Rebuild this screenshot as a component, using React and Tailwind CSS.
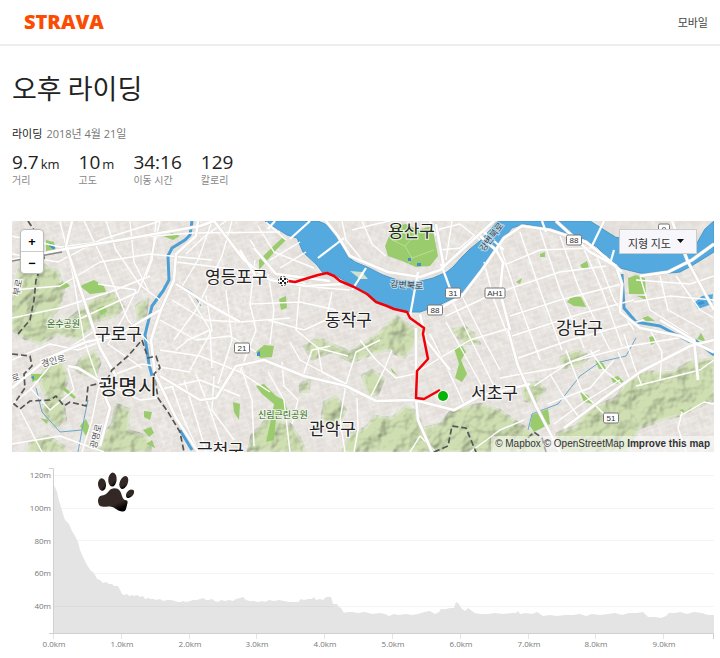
import { useState } from "react";

const stats = [
  { value: "9.7", unit: "km", label: "거리" },
  { value: "10", unit: "m", label: "고도" },
  { value: "34:16", unit: "", label: "이동 시간" },
  { value: "129", unit: "", label: "칼로리" },
];

const KOREAN = "font-['Noto_Sans_CJK_KR',sans-serif]";
const LATIN = "font-['Open_Sans','Noto_Sans_CJK_KR',sans-serif]";

const hills = [
  "M20 262 L36 258 L48 268 L58 270 L64 290 L60 308 L48 320 L66 322 L92 300 L112 292 L124 306 L116 316 L94 322 L80 340 L58 334 L40 344 L24 338 L12 330 L12 300Z",
  "M44 366 L62 362 L68 378 L62 396 L66 420 L54 428 L42 410 L46 396 L40 384Z",
  "M82 358 L94 350 L100 362 L96 378 L82 374 L74 368Z",
  "M116 404 L130 410 L128 430 L146 436 L152 452 L98 452 L104 434 L112 424Z",
  "M136 306 L148 298 L146 316 L138 322Z",
  "M30 442 L48 436 L64 446 L66 452 L28 452Z",
  "M304 346 L318 338 L332 344 L350 352 L362 344 L380 332 L396 316 L410 326 L420 330 L414 346 L404 358 L388 350 L372 354 L352 362 L330 352 L312 360Z",
  "M324 402 L336 396 L346 410 L338 428 L322 420Z",
  "M252 434 L268 418 L290 424 L300 438 L306 452 L248 452Z",
  "M342 452 L350 434 L366 428 L374 416 L392 418 L406 406 L414 410 L424 428 L440 424 L452 410 L480 404 L500 410 L520 424 L538 436 L548 452Z",
  "M362 376 L372 370 L384 378 L378 394 L368 396Z",
  "M556 434 L576 426 L590 408 L616 398 L626 382 L640 372 L672 372 L690 362 L714 358 L714 400 L684 414 L662 420 L640 428 L626 452 L564 452Z",
  "M560 358 L576 350 L590 356 L580 366 L562 368Z",
  "M522 386 L538 382 L546 390 L534 404 L524 400Z",
  "M452 330 L464 326 L474 334 L480 344 L464 344Z",
  "M300 384 L310 380 L308 392 L300 392Z",
];

const parks = [
  "M385 246 L393 226 L406 224 L418 230 L432 226 L438 256 L430 266 L416 267 L402 261 L388 256Z",
  "M163 236 L172 233 L180 236 L173 240Z",
  "M46 240 L54 242 L56 250 L46 251Z",
  "M80 286 L94 280 L104 286 L106 292 L90 294Z",
  "M58 284 L66 282 L70 286 L64 289Z",
  "M97 308 L104 306 L107 311 L101 316Z",
  "M259 270 L276 250 L286 240 L282 238 L259 260Z",
  "M279 299 L286 296 L287 308 L281 310Z",
  "M256 352 L264 345 L274 346 L272 357 L260 358Z",
  "M31 374 L43 374 L45 377 L32 382Z",
  "M63 386 L76 397 L74 399 L62 389Z",
  "M80 426 L86 419 L90 428 L86 436Z",
  "M40 418 L48 420 L47 424Z",
  "M144 411 L152 412 L150 420 L144 417Z",
  "M143 430 L151 427 L154 433 L149 437Z",
  "M146 444 L152 440 L155 448Z",
  "M233 402 L240 404 L239 420 L234 412Z",
  "M256 386 L264 384 L276 396 L284 400 L288 412 L276 418 L274 440 L266 442 L270 424 L274 404 L262 394Z",
  "M540 254 L545 252 L545 257 L540 257Z",
  "M516 282 L522 278 L520 284Z",
  "M580 265 L587 261 L589 268 L582 268Z",
  "M567 302 L572 296 L581 297 L586 307 L574 306Z",
  "M628 278 L636 275 L645 278 L646 294 L629 294Z",
  "M637 296 L646 296 L646 300Z",
  "M642 318 L648 316 L655 321 L646 321Z",
  "M454 348 L462 346 L466 352 L461 360 L467 374 L462 382 L455 378 L459 364Z",
  "M595 360 L603 363 L606 369 L599 369Z",
  "M611 378 L618 376 L624 382 L614 384Z",
  "M577 384 L580 392 L588 395 L593 404 L584 402Z",
  "M532 415 L548 409 L550 424 L534 432 L530 426Z",
  "M649 337 L654 336 L655 343 L651 345Z",
  "M697 339 L701 333 L706 342Z",
  "M679 410 L683 409 L685 413Z",
  "M602 229 L615 236 L610 240Z",
  "M466 288 L471 282 L462 292Z",
  "M391 368 L398 376 L392 372Z",
];

const minorRoads = [
  "M12 236 L60 247 L130 238 L192 233 L280 232",
  "M12 254 L58 262 L100 240 L160 221",
  "M12 290 L60 286 L100 262 L150 254 L212 260",
  "M60 221 L72 270 L84 340 L98 380",
  "M84 221 L104 262 L128 320 L150 344",
  "M106 221 L116 250 L140 285 L160 300",
  "M130 221 L134 262 L148 290",
  "M160 221 L150 262 L138 292 L60 328",
  "M12 318 L60 308 L110 292 L150 276",
  "M98 284 L136 290 L124 316 L108 344 L142 368",
  "M156 221 L152 260 L146 276",
  "M176 262 L240 270 L300 286 L350 290",
  "M186 254 L205 236 L226 221",
  "M212 221 L198 260 L180 290",
  "M232 221 L222 256 L196 310 L174 340",
  "M172 300 L205 320 L240 322 L290 318",
  "M160 320 L196 340 L230 336 L256 352",
  "M186 290 L210 330 L212 368",
  "M206 296 L212 330 L190 370",
  "M226 290 L232 340 L218 384",
  "M255 260 L250 304 L256 330 L240 372",
  "M268 274 L274 310 L270 344",
  "M300 286 L296 330 L318 348 L348 356",
  "M332 292 L326 320 L304 330 L268 320",
  "M250 304 L300 302 L336 310",
  "M160 350 L200 356 L240 372 L270 392",
  "M158 390 L200 380 L240 396",
  "M196 374 L210 410 L224 452",
  "M184 380 L196 418 L206 452",
  "M172 386 L184 420 L196 446",
  "M214 376 L212 410 L234 440",
  "M242 370 L252 400 L254 446",
  "M290 342 L300 360 L330 376 L346 384",
  "M318 348 L322 372 L346 384 L340 420 L345 452",
  "M357 398 L358 430 L354 452",
  "M346 384 L356 352 L380 340",
  "M282 362 L284 386 L298 400 L292 424",
  "M303 376 L312 350 L330 346",
  "M360 340 L376 360 L396 378 L414 374",
  "M370 398 L384 370 L392 350",
  "M414 374 L440 358 L470 340 L510 328",
  "M430 334 L450 374 L464 404",
  "M446 322 L462 350 L484 390",
  "M452 300 L472 342 L494 386",
  "M460 292 L484 340 L500 370",
  "M446 316 L480 300 L500 290",
  "M484 262 L494 300 L512 346",
  "M500 246 L518 300 L540 360",
  "M520 232 L540 290 L562 350",
  "M540 230 L560 290 L584 348",
  "M560 236 L578 286 L610 350",
  "M580 240 L602 290 L622 346",
  "M596 254 L614 300 L634 330",
  "M502 266 L540 250 L592 248",
  "M500 292 L560 272 L606 266",
  "M510 316 L560 300 L622 284",
  "M512 336 L580 314 L634 300",
  "M518 358 L570 340 L644 320",
  "M500 378 L556 368 L600 350",
  "M534 386 L570 362 L630 346 L690 336",
  "M624 334 L634 366 L642 386",
  "M650 330 L662 352 L660 380",
  "M566 350 L582 392 L608 418",
  "M590 350 L604 370 L624 386",
  "M550 374 L562 394 L578 416",
  "M548 404 L590 388 L614 360",
  "M554 424 L584 402 L620 380",
  "M618 352 L630 380",
  "M640 276 L650 310 L688 334",
  "M660 276 L668 310 L704 330",
  "M676 276 L700 310 L714 318",
  "M634 302 L670 296 L714 300",
  "M636 280 L690 284 L714 276",
  "M342 221 L346 240 L364 262",
  "M362 221 L372 244 L386 256",
  "M352 230 L376 224 L390 221",
  "M436 230 L460 224 L480 240",
  "M440 250 L460 248 L474 236",
  "M436 236 L430 221",
  "M452 221 L446 260",
  "M258 226 L274 252 L314 268",
  "M266 222 L286 240",
  "M270 260 L300 242",
  "M280 268 L306 252",
  "M250 240 L272 272 L306 284",
  "M12 360 L50 344 L78 350 L106 340",
  "M12 404 L30 390 L60 354 L96 330",
  "M30 388 L50 410 L74 390 L68 368",
  "M20 410 L42 452",
  "M100 380 L92 420 L82 452",
  "M12 444 L60 436 L104 452",
  "M100 380 L140 400 L158 398",
  "M116 374 L142 364 L190 372",
  "M176 350 L188 340 L210 330",
  "M470 452 L500 430 L524 420",
  "M636 386 L700 370 L714 360",
  "M680 416 L704 402 L714 404",
  "M682 412 L678 428 L686 452",
  "M410 452 L420 436 L436 452",
  "M268 372 L284 400 L290 452",
];

const majorRoads = [
  "M12 260 L60 250 L120 240 L200 226 L214 221",
  "M72 221 L66 246 L84 300 L100 348 L116 376",
  "M12 388 L48 358 L86 342 L116 336 L160 310",
  "M198 221 L196 236 L176 254 L174 280 L160 312 L151 340 L155 374 L176 418 L198 452",
  "M176 284 L208 304 L240 322",
  "M214 221 L244 260 L270 280 L306 286 L344 284",
  "M240 250 L258 280",
  "M160 376 L200 400 L216 398 L236 366 L264 360 L304 376 L346 386 L376 401 L414 400 L430 404 L454 410 L480 396 L530 384",
  "M254 248 L276 274 L330 281",
  "M416 328 L416 398 L418 420 L432 452",
  "M420 314 L426 340 L450 370",
  "M508 330 L518 366 L536 406 L560 452",
  "M503 262 L500 292 L510 330",
  "M564 428 L604 398 L640 372 L690 346 L714 340",
  "M640 276 L668 272 L692 260 L714 244",
  "M616 266 L622 284 L620 312 L640 328 L680 336 L714 352",
  "M660 320 L694 340 L698 380",
  "M672 221 L688 262 L714 310",
  "M556 221 L590 252 L616 266",
  "M326 221 L338 236 L350 256 L388 272 L420 277 L440 270 L464 248 L494 221",
  "M444 268 L436 224",
  "M480 236 L496 250 L504 264",
  "M430 314 L462 296 L482 270 L504 238 L522 226 L550 230 L586 242 L606 258 L622 272",
  "M100 446 L110 408 L98 380 L78 368 L68 366",
];

const bridges = [
  "M318 258 L344 238",
  "M366 268 L352 290",
  "M418 272 L410 316",
  "M441 264 L452 294",
  "M484 232 L504 250",
  "M542 221 L546 232",
  "M604 221 L591 248",
  "M614 250 L610 264",
  "M275 221 L268 229",
  "M310 221 L290 239",
];

const boundaries = [
  "M28 221 L38 236 L44 258 L36 280 L34 300 L30 320 L18 334",
  "M12 354 L30 356 L32 366 L24 374 L25 388 L14 404 L20 409 L30 401 L50 400 L56 396 L64 406 L70 402 L86 406 L88 386 L106 382 L112 370 L128 356 L142 340 L148 358 L156 356 L160 368 L154 374 L158 398 L168 412 L180 432 L184 452",
  "M434 452 L448 446 L452 426 L466 428 L476 452",
  "M528 438 L534 432 L542 438 L546 452",
];

const districts = [
  { name: "영등포구", x: 205, y: 283, size: 17 },
  { name: "용산구", x: 388, y: 237, size: 17 },
  { name: "동작구", x: 325, y: 326, size: 17 },
  { name: "강남구", x: 556, y: 334, size: 17 },
  { name: "서초구", x: 471, y: 399, size: 17 },
  { name: "구로구", x: 95, y: 340, size: 17 },
  { name: "관악구", x: 309, y: 435, size: 17 },
  { name: "금천구", x: 197, y: 456, size: 17 },
  { name: "광명시", x: 99, y: 394, size: 21 },
];

const shields = [
  { text: "21", x: 242, y: 348 },
  { text: "31", x: 453, y: 293 },
  { text: "88", x: 435, y: 310 },
  { text: "AH1", x: 495, y: 293 },
  { text: "88", x: 574, y: 240 },
  { text: "9", x: 664, y: 229 },
  { text: "51", x: 611, y: 418 },
];

const river =
  "M265 221 L287 235 L297 238 L303 252 L317 265 L323 273 L335 275 L350 284 L368 294 L378 303 L392 308 L407 312 L420 312 L437 306 L454 298 L470 287 L480 272 L497 246 L512 228 L524 224 L547 228 L563 232 L582 238 L597 247 L608 258 L620 268 L640 273 L660 274 L680 272 L693 265 L714 252 L714 221 L705 229 L697 243 L650 245 L615 237 L598 226 L590 221 L498 221 L492 228 L480 241 L470 249 L462 257 L453 267 L447 272 L433 278 L417 282 L400 281 L383 275 L367 267 L355 262 L348 257 L343 247 L338 235 L325 224 L318 221Z";

const Street = ({ paths, width, color = "#fff", ...rest }) => (
  <g fill="none" stroke={color} strokeWidth={width} strokeLinejoin="round" {...rest}>
    {paths.map((d) => (
      <path key={d} d={d} />
    ))}
  </g>
);

const MapCanvas = () => (
  <svg
    viewBox="12 221 702 231"
    className={`block w-full h-auto ${KOREAN}`}
    role="img"
    aria-label="라이딩 경로"
  >
    <defs>
      <pattern id="blocksA" width="13" height="10" patternUnits="userSpaceOnUse" patternTransform="rotate(-18)">
        <path d="M0 0H13M0 0V10M6 0V5H13" fill="none" stroke="#fff" strokeWidth="1" />
      </pattern>
      <pattern id="blocksB" width="11" height="12" patternUnits="userSpaceOnUse" patternTransform="rotate(24)">
        <path d="M0 0H11M0 0V12M0 6H6V12" fill="none" stroke="#fff" strokeWidth="1" />
      </pattern>
      <filter id="relief" x="0" y="0" width="100%" height="100%" colorInterpolationFilters="sRGB">
        <feTurbulence type="fractalNoise" baseFrequency="0.06" numOctaves="3" seed="8" result="noise" />
        <feDiffuseLighting in="noise" surfaceScale="2.2" diffuseConstant="1.08" lightingColor="#fff" result="light">
          <feDistantLight azimuth="225" elevation="64" />
        </feDiffuseLighting>
        <feComposite in="light" in2="SourceAlpha" operator="in" result="shade" />
        <feBlend in="SourceGraphic" in2="shade" mode="multiply" />
      </filter>
      <filter id="grain" x="0" y="0" width="100%" height="100%" colorInterpolationFilters="sRGB">
        <feTurbulence type="fractalNoise" baseFrequency="0.12" numOctaves="3" seed="3" />
        <feColorMatrix values="0 0 0 0 0.94  0 0 0 0 0.93  0 0 0 0 0.92  1.6 0 0 0 -0.55" />
      </filter>
    </defs>

    {/* Land and terrain */}
    <rect x="12" y="221" width="702" height="231" fill="#e2ddd8" />
    <rect x="12" y="221" width="702" height="231" filter="url(#grain)" />
    <path d="M12 221H265L310 280L420 320L410 452H12Z" fill="url(#blocksA)" opacity=".4" />
    <path d="M410 315L520 225L714 280V452H410Z" fill="url(#blocksA)" opacity=".4" />
    <path d="M150 300L260 290L260 380L160 452ZM330 221H500L440 270L380 266Z" fill="url(#blocksB)" opacity=".4" />
    <g filter="url(#relief)">
      {hills.map((d) => (
        <path key={d} d={d} fill="#cfdfb2" stroke="#dde4cd" strokeWidth="3" strokeLinejoin="round" />
      ))}
    </g>
    <g fill="#9acb6d">
      {parks.map((d) => (
        <path key={d} d={d} />
      ))}
    </g>
    <path d="M392 240L405 246L418 232M405 246L412 258L434 250M412 258L408 264" fill="none" stroke="#b9dd97" />

    {/* Water */}
    <path d={river} fill="#54aade" stroke="#4698cd" strokeWidth="1" />
    <path d="M350 271L362 272L368 279L360 279Z" fill="#cfe0cf" />
    <Street
      paths={[
        "M192 221 L190 235 L185 240 L172 248 L168 256 L169 280 L163 291 L152 306 L145 335 L146 344 L149 364 L152 376",
        "M622 274 L624 308 L636 322 L660 326 L690 342",
        "M674 334 L696 341 L714 355",
        "M180 430 L192 450",
      ]}
      width="3"
      color="#4b9fd4"
    />
    <Street
      paths={[
        "M176 283 L192 292 L201 306",
        "M36 388 L42 412 L60 432 L82 430 L85 414 L88 400",
        "M82 430 L78 452",
        "M636 338 L626 356 L600 362 L580 376 L558 404 L532 414 L528 430",
      ]}
      width="1"
      color="#6aa9c9"
    />
    <path d="M694 303L702 296L713 294L712 304L698 309Z" fill="#54aade" />
    <path
      d="M408 258h3v3h-3zM417 263h4v3h-4zM50 243l5 4l-1 3l-5-4zM257 353l3-2v5h-3zM31 377l3-1v4zM697 303l6-2l2 2l-5 2z"
      fill="#3d8fd0"
    />

    {/* Roads */}
    <Street paths={minorRoads} width="1.4" />
    <Street paths={majorRoads} width="3.6" color="#dfdad4" />
    <Street paths={majorRoads} width="2.6" />
    <Street paths={bridges} width="2.2" />
    <Street paths={boundaries} width="1.7" color="#555" strokeDasharray="6 3" />
    <path d="M12 261L62 252" stroke="#888" strokeWidth="1.5" />

    {/* Labels */}
    <g fill="#222" stroke="#fff" strokeWidth="2.5" strokeOpacity=".7" paintOrder="stroke">
      {districts.map((d) => (
        <text key={d.name} x={d.x} y={d.y} fontSize={d.size}>
          {d.name}
        </text>
      ))}
    </g>
    <g fontSize="9" fill="#2b6322" stroke="#eef3e4" strokeWidth="2" paintOrder="stroke">
      <text x="47" y="327">온수공원</text>
      <text x="258" y="418">신림근린공원</text>
    </g>
    <g fontSize="9" fill="#555" stroke="#fff" strokeWidth="2" paintOrder="stroke">
      <text x="42" y="367" transform="rotate(-14 42 367)">경인로</text>
      <text x="96" y="449" transform="rotate(-76 96 449)">광명로</text>
      <text x="13" y="382" transform="rotate(-20 13 382)">로</text>
      <text x="19" y="296" transform="rotate(-78 19 296)">부로</text>
    </g>
    <g fontSize="9" fill="#444" stroke="#b5d9ee" strokeWidth="2" paintOrder="stroke">
      <text x="390" y="287" transform="rotate(4 390 287)">강변북로</text>
      <text x="484" y="252" transform="rotate(-53 484 252)">강변북로</text>
    </g>
    {shields.map((s) => {
      const w = s.text.length > 2 ? 20 : s.text.length > 1 ? 15 : 11;
      return (
        <g key={`${s.x}-${s.y}`}>
          <rect x={s.x - w / 2} y={s.y - 5} width={w} height="10" rx="1.5" fill="#fff" stroke="#777" />
          <text
            x={s.x}
            y={s.y + 3}
            fontSize="8"
            textAnchor="middle"
            fill="#333"
            className="font-['Liberation_Sans',sans-serif]"
          >
            {s.text}
          </text>
        </g>
      );
    })}

    {/* Ride */}
    <path
      d="M288 281L295 282L318 275L327 273L334 276L340 281L354 287L367 294L376 302L387 306L394 309L407 312L410 318L424 328L423 334L428 359L417 371L416 398L424 399L440 390"
      fill="none"
      stroke="#f00008"
      strokeWidth="2.5"
      strokeLinejoin="round"
    />
    <circle cx="443" cy="396" r="6" fill="#fff" />
    <circle cx="443" cy="396" r="5" fill="#08b408" />
    <circle cx="283" cy="281" r="5.5" fill="#fff" />
    <circle cx="283" cy="281" r="4.6" fill="#fff" stroke="#333" strokeWidth="1" strokeDasharray="2 1.6" />
    <path d="M280 278h2v2h-2zM284 278h2v2h-2zM282 280h2v2h-2zM280 282h2v2h-2zM284 282h2v2h-2z" fill="#222" />
  </svg>
);

const profile =
  "54,486 55,487 57,492 59,501 61,507 63,514 65,520 67,522 69,524 72,531 75,536 78,542 80,550 83,557 87,565 91,571 93,572 95,575 97,579 100,580 103,583 106,582 109,584 112,584 114,586 118,586 120,590 122,594 124,595 127,594 129,596 132,595 134,596 137,595 140,597 143,596 145,599 148,598 151,599 154,599 156,600 160,599 163,601 167,600 171,600 175,601 178,602 181,602 183,601 186,602 190,601 193,600 197,600 200,599 203,598 206,600 209,600 212,599 215,601 218,602 221,600 225,601 229,600 233,601 236,599 240,598 243,597 246,600 250,601 254,601 258,602 262,601 265,602 269,600 274,601 279,600 284,601 290,602 298,602 301,599 304,600 308,599 312,599 314,597 316,600 320,599 323,600 326,597 331,597 333,604 337,604 339,607 341,608 344,613 347,612 352,612 358,613 365,612 372,614 380,613 385,614 389,616 394,614 399,615 406,614 412,615 418,614 424,612 430,611 435,614 439,612 441,609 446,609 450,608 454,608 456,602 458,603 462,609 465,611 468,608 472,611 475,613 480,614 488,614 495,613 503,614 512,613 516,613 518,611 520,614 526,613 532,614 537,612 540,614 543,616 550,615 557,616 565,615 573,615 580,614 586,616 592,614 600,615 608,614 615,613 622,615 629,613 637,613 643,612 646,615 648,617 655,617 661,618 666,616 669,613 675,613 680,612 687,614 694,612 702,613 708,615 714,615";

const ElevationChart = () => (
  <svg
    viewBox="12 464 702 190"
    className={`block w-full h-auto ${LATIN}`}
    role="img"
    aria-label="고도 그래프"
  >
    <defs>
      <linearGradient id="paw" x1="0" y1="0" x2=".6" y2="1">
        <stop offset="0" stopColor="#aaa" />
        <stop offset=".22" stopColor="#302825" />
        <stop offset=".75" stopColor="#342825" />
        <stop offset="1" stopColor="#000" />
      </linearGradient>
    </defs>
    <g stroke="#f4f4f4">
      {[475.5, 508.5, 540.5, 573.5, 606.5].map((y) => (
        <path key={y} d={`M54 ${y}H714`} />
      ))}
    </g>
    <polygon points={`54,634 ${profile} 714,634`} fill="#e4e4e4" />
    <path d="M54 606.5H334" stroke="#dcdcdc" />
    <path d="M49 468.5H53.5V633.5M49 633.5H714" fill="none" stroke="#d0d0d0" />
    <path d="M713.5 634V639" stroke="#d0d0d0" />
    <g fontSize="8" fill="#777">
      {["120m", "100m", "80m", "60m", "40m"].map((t, i) => (
        <text key={t} x="51" y={478 + Math.round(i * 32.8)} textAnchor="end">
          {t}
        </text>
      ))}
      {Array.from({ length: 10 }, (_, i) => (
        <g key={i}>
          <path d={`M${Math.round(54 + i * 67.8) - 0.5} 634V639`} stroke="#e4e4e4" />
          <text x={Math.round(54 + i * 67.8)} y="647" textAnchor="middle">
            {`${i}.0km`}
          </text>
        </g>
      ))}
    </g>

    {/* Paw marker */}
    <g fill="url(#paw)">
      <ellipse cx="102" cy="484.5" rx="4" ry="6.2" transform="rotate(-6 102 484)" />
      <ellipse cx="112.5" cy="479.5" rx="4.2" ry="7" transform="rotate(4 112 479)" />
      <ellipse cx="124" cy="482.5" rx="4" ry="6.8" transform="rotate(22 124 482)" />
      <ellipse cx="130.5" cy="493.5" rx="3.2" ry="5" transform="rotate(42 130 493)" />
      <path d="M109 491C111 488 117 487 120 491C122 494 122 499 125 500C128 500 128 502 127 505C126 509 126 512 122 511.500C117 511 115 507 110 506.500C106 506 101 508 99 505C97 501 98 496 102 495.500C106 495 107 493 109 491Z" />
    </g>
  </svg>
);

const App = () => {
  const [style, setStyle] = useState("지형 지도");

  return (
    <div className={`min-h-screen bg-white text-[#222] ${LATIN}`}>
      {/* Header */}
      <header className="flex items-center justify-between h-[46px] border-b-2 border-[#eeeeee] pl-6 pr-3">
        <a
          href="#"
          className="text-[20px] leading-6 font-extrabold text-[#fc4c02] font-['Open_Sans',sans-serif]"
        >
          STRAVA
        </a>
        <a href="#" className={`text-[11px] leading-4 text-[#444] ${KOREAN}`}>
          모바일
        </a>
      </header>

      <main className="pl-3 pr-1.5">
        {/* Activity summary */}
        <h1 className={`pt-[22px] text-[27px] leading-10 font-normal ${KOREAN}`}>오후 라이딩</h1>
        <p className="mt-[18px] flex items-center gap-1 text-[11px] leading-4 text-[#777]">
          <span className="text-[#222]">라이딩</span>
          <span>2018년 4월 21일</span>
        </p>
        <ul className="mt-2.5 flex gap-[19px]">
          {stats.map((s) => (
            <li key={s.label}>
              <p className="flex h-5 items-baseline text-[19px] leading-5">
                {s.value}
                {s.unit && <span className="ml-0.5 text-[13px] leading-4">{s.unit}</span>}
              </p>
              <p className="text-[10px] leading-4 text-[#888]">{s.label}</p>
            </li>
          ))}
        </ul>

        {/* Map */}
        <section className="relative mt-[33px]">
          <MapCanvas />
          <div className="absolute left-2 top-2 flex w-6 flex-col rounded-sm border border-[#bbb] bg-white shadow-sm">
            <button
              type="button"
              aria-label="확대"
              className="h-[22px] border-b border-[#ccc] text-[13px] leading-5 font-bold text-black"
            >
              +
            </button>
            <button
              type="button"
              aria-label="축소"
              className="h-[21px] text-[13px] leading-5 font-bold text-black"
            >
              −
            </button>
          </div>
          <div className="absolute right-[17px] top-2 h-[25px] w-[78px] border border-[#ccc] bg-[#f6f6fb]">
            <select
              aria-label="지도 유형"
              value={style}
              onChange={(e) => setStyle(e.target.value)}
              className={`h-full w-full appearance-none pb-1 pl-2 text-[11px] leading-5 text-[#333] ${KOREAN}`}
            >
              <option>지형 지도</option>
              <option>위성 지도</option>
            </select>
            <svg viewBox="0 0 7 4" className="pointer-events-none absolute right-3 top-[9px] h-1 w-[7px]">
              <path d="M0 0H7L3.5 4Z" fill="#111" />
            </svg>
          </div>
          <p className="absolute bottom-0 right-0 bg-white/50 px-1 text-[10px] leading-4 text-[#333] font-['Liberation_Sans',sans-serif]">
            <a href="#">© Mapbox</a> <a href="#">© OpenStreetMap</a>{" "}
            <a href="#" className="font-bold">
              Improve this map
            </a>
          </p>
        </section>

        {/* Elevation */}
        <section className="mt-3">
          <ElevationChart />
        </section>
      </main>
    </div>
  );
};

export default App;
